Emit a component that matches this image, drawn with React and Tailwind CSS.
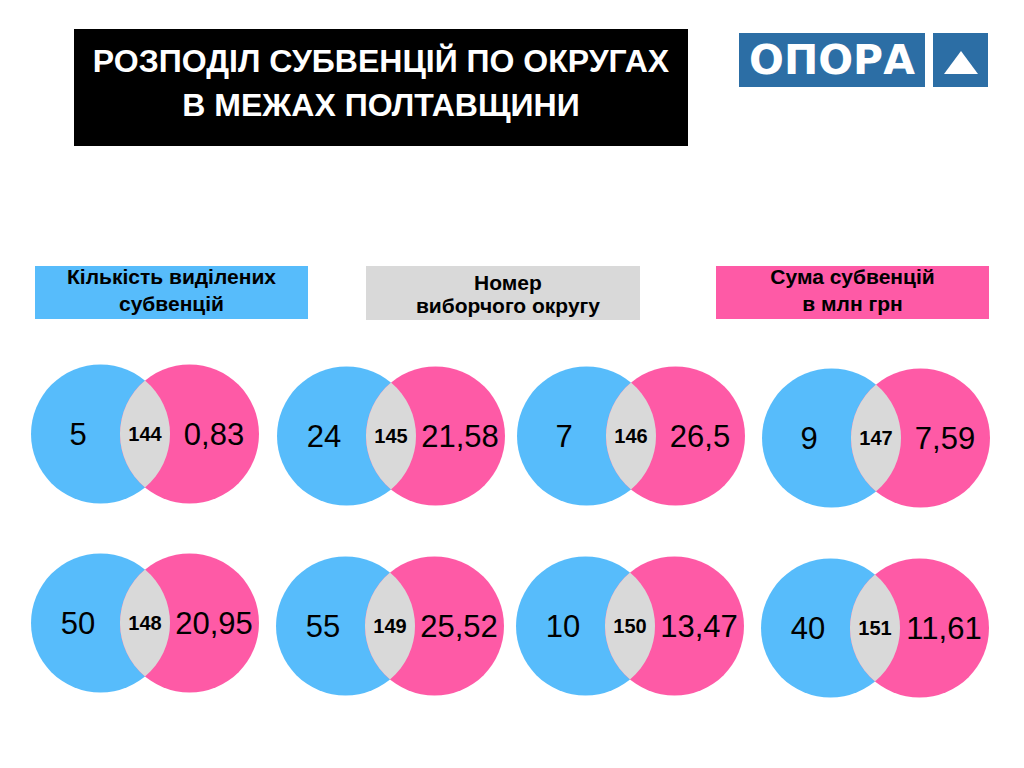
import React from "react";

const venns = [
  [
    { a: "5", n: "144", b: "0,83", mt: "mt-0" },
    { a: "24", n: "145", b: "21,58", mt: "mt-[2px]", ml: "ml-[18px]" },
    { a: "7", n: "146", b: "26,5", mt: "mt-[2px]", ml: "ml-[12px]" },
    { a: "9", n: "147", b: "7,59", mt: "mt-[4px]", ml: "ml-[17px]" },
  ],
  [
    { a: "50", n: "148", b: "20,95", mt: "mt-0" },
    { a: "55", n: "149", b: "25,52", mt: "mt-[3px]", ml: "ml-[17px]" },
    { a: "10", n: "150", b: "13,47", mt: "mt-[3px]", ml: "ml-[12px]" },
    { a: "40", n: "151", b: "11,61", mt: "mt-[5px]", ml: "ml-[17px]" },
  ],
];

function Venn({ a, n, b, mt, ml }) {
  return (
    <div className={`relative w-[228px] h-[140px] shrink-0 ${mt || ""} ${ml || ""}`}>
      <svg width="228" height="140" viewBox="0 0 228 140" className="block">
        <circle cx="69.5" cy="70" r="69.5" fill="#57bcfb" />
        <circle cx="158.5" cy="70" r="69.5" fill="#fe5aa6" />
        <path
          d="M114 16.6 A69.5 69.5 0 0 1 114 123.4 A69.5 69.5 0 0 1 114 16.6 Z"
          fill="#d9d9d9"
        />
      </svg>
      <span className="absolute left-[47px] top-1/2 -translate-x-1/2 -translate-y-1/2 text-[31px] leading-none text-black whitespace-nowrap">
        {a}
      </span>
      <span className="absolute left-[114px] top-1/2 -translate-x-1/2 -translate-y-1/2 text-[20px] font-bold leading-none text-black whitespace-nowrap">
        {n}
      </span>
      <span className="absolute left-[183px] top-1/2 -translate-x-1/2 -translate-y-1/2 text-[31px] leading-none text-black whitespace-nowrap">
        {b}
      </span>
    </div>
  );
}

export default function App() {
  return (
    <div
      className="w-[1024px] h-[768px] bg-white overflow-hidden"
      style={{ fontFamily: '"Liberation Sans", Arial, sans-serif' }}
    >
      {/* header */}
      <div className="flex items-start pt-[29px] pl-[74px]">
        <div className="w-[614px] h-[117px] bg-black pt-[10px] text-center text-white font-bold text-[32px] leading-[44px] whitespace-nowrap">
          <div>РОЗПОДІЛ СУБВЕНЦІЙ ПО ОКРУГАХ</div>
          <div>В МЕЖАХ ПОЛТАВЩИНИ</div>
        </div>
        <div className="ml-[51px] mt-[4px] flex gap-[8px]">
          <div
            className="w-[186px] h-[54px] bg-[#2c6ea5] flex items-center justify-center text-white font-bold text-[41px] leading-none"
            style={{ fontFamily: '"DejaVu Sans", sans-serif' }}
          >
            ОПОРА
          </div>
          <div className="w-[55px] h-[54px] bg-[#2c6ea5] flex items-center justify-center">
            <svg width="34" height="23" viewBox="0 0 34 23" className="mt-[4px]">
              <polygon points="17,0 34,23 0,23" fill="#fff" />
            </svg>
          </div>
        </div>
      </div>

      {/* legend */}
      <div className="flex items-start mt-[120px] pl-[35px] text-[21px] font-bold text-black">
        <div className="w-[273px] h-[53px] bg-[#57bcfb] text-center leading-[27px]">
          <div className="-mt-[3px]">
            <div>Кількість виділених</div>
            <div>субвенцій</div>
          </div>
        </div>
        <div className="ml-[58px] w-[274px] h-[54px] bg-[#d9d9d9] text-center leading-[23px] pt-[5px] pl-[10px]">
          <div>Номер</div>
          <div>виборчого округу</div>
        </div>
        <div className="ml-[76px] w-[273px] h-[53px] bg-[#fe5aa6] text-center leading-[27px]">
          <div className="-mt-[3px]">
            <div>Сума субвенцій</div>
            <div>в млн грн</div>
          </div>
        </div>
      </div>

      {/* venns */}
      <div className="mt-[44px] pl-[31px] flex flex-col gap-[45px]">
        {venns.map((row, i) => (
          <div key={i} className="flex items-start">
            {row.map((v) => (
              <Venn key={v.n} {...v} />
            ))}
          </div>
        ))}
      </div>
    </div>
  );
}
